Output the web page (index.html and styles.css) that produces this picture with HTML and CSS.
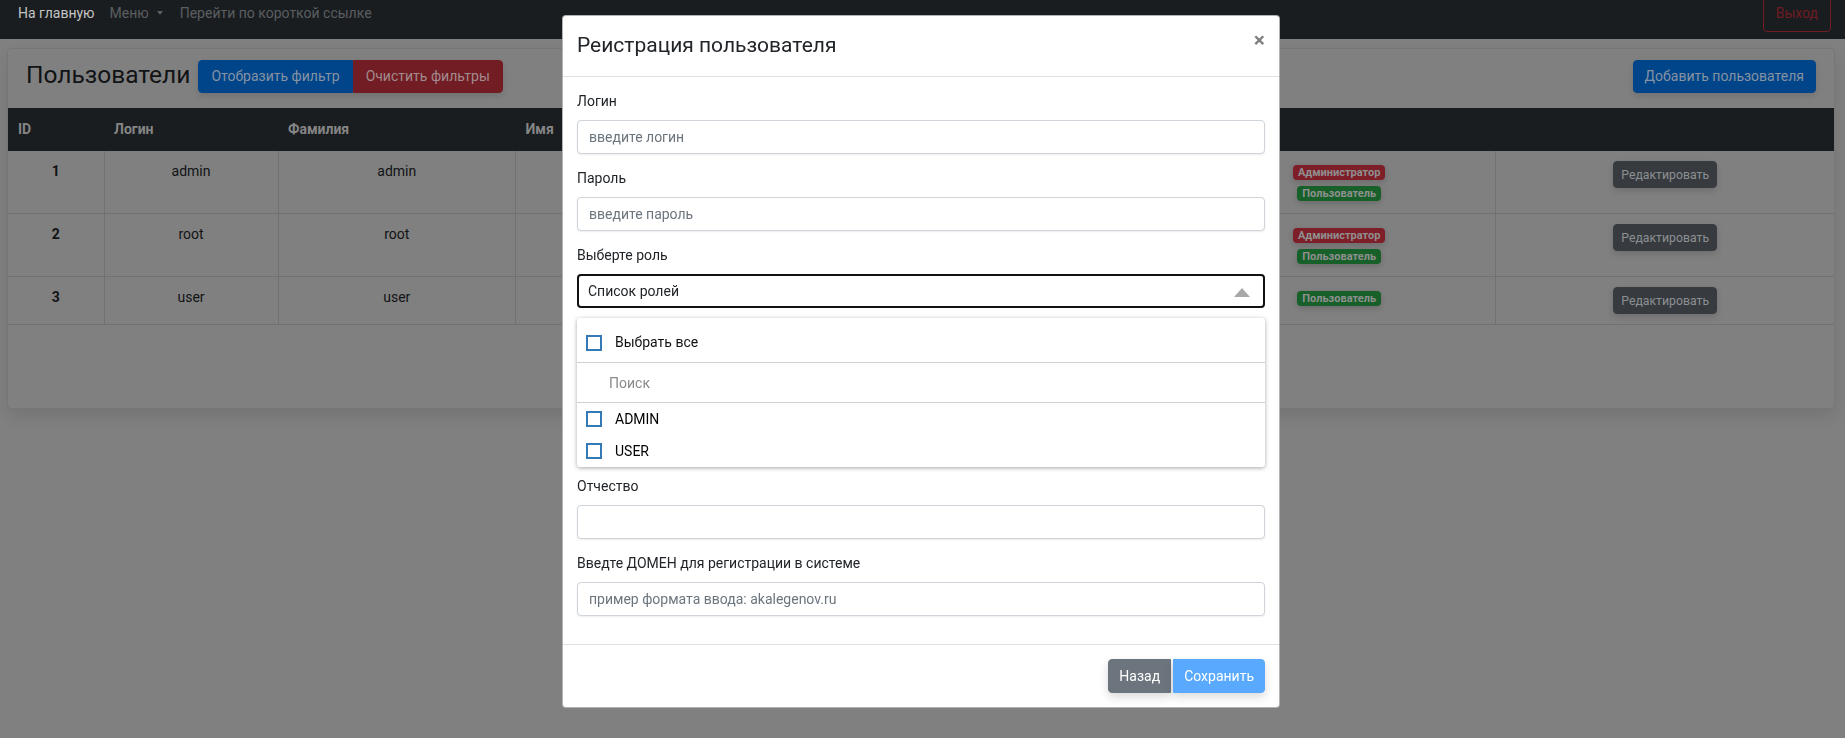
FILE: index.html
```html
<!DOCTYPE html>
<html lang="ru">
<head>
<meta charset="utf-8">
<title>Пользователи</title>
<link rel="stylesheet" href="styles.css">
</head>
<body>
<nav class="navbar">
  <div class="nav-left">
    <a class="brand">На главную</a>
    <a class="nav-link menu">Меню<span class="caret"></span></a>
    <a class="nav-link">Перейти по короткой ссылке</a>
  </div>
  <button class="btn-logout">Выход</button>
</nav>

<main class="page">
  <section class="card">
    <div class="card-head">
      <h3 class="title">Пользователи</h3>
      <div class="btn-group">
        <button class="btn btn-primary">Отобразить фильтр</button>
        <button class="btn btn-danger">Очистить фильтры</button>
      </div>
      <button class="btn btn-primary add">Добавить пользователя</button>
    </div>
    <table class="users">
      <colgroup>
        <col class="c-id"><col class="c-login"><col class="c-last"><col class="c-first"><col class="c-mid"><col class="c-role"><col>
      </colgroup>
      <thead>
        <tr><th>ID</th><th>Логин</th><th>Фамилия</th><th>Имя</th><th>Отчество</th><th>Роли</th><th></th></tr>
      </thead>
      <tbody>
        <tr>
          <td class="id">1</td><td>admin</td><td>admin</td><td>admin</td><td>admin</td>
          <td><span class="badge red">Администратор</span><br><span class="badge green">Пользователь</span></td>
          <td><button class="btn-edit">Редактировать</button></td>
        </tr>
        <tr>
          <td class="id">2</td><td>root</td><td>root</td><td>root</td><td>root</td>
          <td><span class="badge red">Администратор</span><br><span class="badge green">Пользователь</span></td>
          <td><button class="btn-edit">Редактировать</button></td>
        </tr>
        <tr>
          <td class="id">3</td><td>user</td><td>user</td><td>user</td><td>user</td>
          <td><span class="badge green">Пользователь</span></td>
          <td><button class="btn-edit">Редактировать</button></td>
        </tr>
      </tbody>
    </table>
  </section>
</main>

<div class="modal-layer">
  <div class="modal">
    <div class="modal-header">
      <h4 class="modal-title">Реистрация пользователя</h4>
      <button class="close">×</button>
    </div>
    <div class="modal-body">
      <div class="group">
        <label class="label">Логин</label>
        <input class="input" placeholder="введите логин">
      </div>
      <div class="group">
        <label class="label">Пароль</label>
        <input class="input" placeholder="введите пароль">
      </div>
      <div class="group select-group">
        <label class="label">Выберте роль</label>
        <div class="select">
          <span>Список ролей</span>
          <span class="tri"></span>
        </div>
        <div class="dropdown">
          <div class="dd-all"><span class="check"></span><span>Выбрать все</span></div>
          <div class="dd-search"><input class="search" placeholder="Поиск"></div>
          <div class="dd-opt"><span class="check"></span><span>ADMIN</span></div>
          <div class="dd-opt"><span class="check"></span><span>USER</span></div>
        </div>
      </div>
      <div class="group covered">
        <label class="label">Фамилия</label>
        <input class="input">
      </div>
      <div class="group covered">
        <label class="label">Имя</label>
        <input class="input">
      </div>
      <div class="group">
        <label class="label">Отчество</label>
        <input class="input">
      </div>
      <div class="group">
        <label class="label">Введте ДОМЕН для регистрации в системе</label>
        <input class="input" placeholder="пример формата ввода: akalegenov.ru">
      </div>
    </div>
    <div class="modal-footer">
      <button class="fbtn back">Назад</button>
      <button class="fbtn save">Сохранить</button>
    </div>
  </div>
</div>
</body>
</html>
```

FILE: styles.css
```css
* { box-sizing: border-box; }

body {
  margin: 0;
  height: 738px;
  overflow: hidden;
  font-family: Roboto, "Liberation Sans", Arial, sans-serif;
  font-size: 14px;
  line-height: 1.5;
  color: #111315;
  background: #808080;
}

button { font-family: inherit; }

/* navbar */
.navbar {
  display: flex;
  align-items: center;
  justify-content: space-between;
  height: 52px;
  margin-top: -13px;
  padding: 0 14px 0 18px;
  background: #1a1d20;
}
.nav-left { display: flex; align-items: center; }
.brand { color: #c4c4c4; margin-right: 15px; }
.nav-link { color: #5b5d60; }
.menu { display: flex; align-items: center; margin-right: 17px; }
.caret {
  margin-left: 8px;
  width: 0; height: 0;
  border-left: 3px solid transparent;
  border-right: 3px solid transparent;
  border-top: 4px solid #5b5d60;
}
.btn-logout {
  font-size: 14px;
  line-height: 21px;
  padding: 7px 12px;
  background: transparent;
  color: #6e1b23;
  border: 1px solid #6e1b23;
  border-radius: 4px;
}

/* card */
.page { padding: 9px 10px 0 7px; }
.card {
  height: 361px;
  background: #808080;
  border: 1px solid #767676;
  border-radius: 4px;
  box-shadow: 0 8px 16px rgba(0,0,0,.09);
}
.card-head {
  display: flex;
  align-items: center;
  padding: 11px 18px 15px 18px;
}
.title {
  margin: 0 8px 3px 0;
  font-size: 24.5px;
  font-weight: 400;
  line-height: 1.2;
  color: #111315;
}
.btn-group { display: flex; box-shadow: 0 3px 6px rgba(0,0,0,.12); border-radius: 4px; }
.btn {
  font-size: 14px;
  line-height: 21px;
  padding: 5px 12px;
  border: 1px solid transparent;
  border-radius: 4px;
  color: #8593a2;
}
.btn-primary { background: #00448a; border-color: #00448a; }
.btn-danger { background: #721c24; border-color: #721c24; color: #a08c8e; }
.btn-group .btn-primary { border-top-right-radius: 0; border-bottom-right-radius: 0; }
.btn-group .btn-danger { border-top-left-radius: 0; border-bottom-left-radius: 0; }
.add { margin-left: auto; padding: 5px 11px; box-shadow: 0 3px 6px rgba(0,0,0,.12); }

/* table */
.users {
  width: 100%;
  border-collapse: collapse;
  table-layout: fixed;
}
.c-id { width: 96px; }
.c-login { width: 174px; }
.c-last { width: 237.5px; }
.c-first { width: 333.5px; }
.c-mid { width: 333.5px; }
.c-role { width: 313.4px; }
.users th {
  background: #1a1d20;
  color: #858585;
  font-weight: 700;
  text-align: left;
  padding: 11px 10px;
  line-height: 21px;
}
.users td {
  padding: 10px;
  line-height: 21px;
  text-align: center;
  vertical-align: top;
  border: 1px solid #6f7173;
  color: #111315;
}
.users td:first-child { border-left: none; }
.users td:last-child { border-right: none; }
.users tbody tr:first-child td { border-top: none; }
.users .id { font-weight: 700; }

.badge {
  display: inline-block;
  vertical-align: middle;
  font-size: 11px;
  font-weight: 700;
  line-height: 1;
  padding: 2px 5px;
  border-radius: 4px;
  color: #8f8f8f;
  box-shadow: 0 2px 6px rgba(0,0,0,.18);
}
.red { background: #7e1e28; }
.green { background: #17602a; }

.btn-edit {
  font-size: 12.25px;
  line-height: 18.4px;
  padding: 3.5px 7px;
  border: 1px solid #373b3f;
  border-radius: 4px;
  background: #373b3f;
  color: #8c8f92;
  box-shadow: 0 3px 7px rgba(0,0,0,.14);
}

/* modal */
.modal-layer {
  position: fixed;
  inset: 0;
  display: flex;
  justify-content: center;
  align-items: flex-start;
  padding-right: 3px;
}
.modal {
  width: 718px;
  margin-top: 15px;
  background: #fff;
  border: 1px solid rgba(0,0,0,.3);
  border-radius: 4px;
  color: #212529;
}
.modal-header {
  display: flex;
  align-items: flex-start;
  padding: 14px 14px 14.5px 14px;
  border-bottom: 1px solid #dee2e6;
}
.modal-title {
  margin: 0;
  font-size: 21px;
  font-weight: 400;
  line-height: 31.5px;
  color: #212529;
}
.close {
  margin: -14px -14px -14px auto;
  padding: 14px;
  background: transparent;
  border: 0;
  font-size: 21px;
  font-weight: 700;
  line-height: 1;
  color: #000;
  opacity: .5;
}
.modal-body { padding: 14px; }
.group { margin-bottom: 14px; }
.covered { visibility: hidden; }
.label {
  display: block;
  margin-bottom: 8px;
  line-height: 21px;
  color: #212529;
}
.input {
  display: block;
  width: 100%;
  height: 34px;
  padding: 0 11px;
  font-family: inherit;
  font-size: 14px;
  color: #495057;
  background: #fff;
  border: 1px solid #ced4da;
  border-radius: 4px;
  box-shadow: 0 1px 2px rgba(0,0,0,.07);
}
.input::placeholder { color: #6c757d; }

.select-group { position: relative; }
.select {
  display: flex;
  align-items: center;
  justify-content: space-between;
  height: 34px;
  padding: 0 13px 0 9px;
  border: 2px solid #111;
  border-radius: 4px;
  color: #212529;
}
.tri {
  width: 0; height: 0;
  border-left: 8.5px solid transparent;
  border-right: 8.5px solid transparent;
  border-bottom: 9px solid #a8a8a8;
  margin-top: 2px;
}
.dropdown {
  position: absolute;
  left: 0;
  right: 0;
  top: 73px;
  z-index: 5;
  background: #fff;
  border-radius: 3px;
  box-shadow: 0 1px 4px rgba(0,0,0,.35);
}
.check {
  width: 16px;
  height: 16px;
  border: 2px solid #337ab7;
  background: #fff;
  flex: none;
}
.dd-all {
  display: flex;
  align-items: center;
  gap: 13px;
  height: 45px;
  padding: 5px 0 0 9px;
  border-bottom: 1px solid #d0d0d0;
  color: #111;
}
.dd-search {
  height: 40px;
  border-bottom: 1px solid #d0d0d0;
}
.search {
  width: 100%;
  height: 39px;
  border: 0;
  padding: 0 0 0 32px;
  font-family: inherit;
  font-size: 14px;
  background: transparent;
  outline: none;
}
.search::placeholder { color: #8a8a8a; }
.dd-opt {
  display: flex;
  align-items: center;
  gap: 13px;
  height: 32px;
  padding-left: 9px;
  color: #000;
}

.modal-footer {
  display: flex;
  justify-content: flex-end;
  padding: 14px;
  border-top: 1px solid #dee2e6;
}
.fbtn {
  font-size: 14px;
  line-height: 20px;
  padding: 6px 10px;
  border: 1px solid transparent;
  color: #fff;
  box-shadow: 0 4px 10px rgba(0,0,0,.15);
}
.back {
  background: #6c757d;
  border-color: #6c757d;
  border-radius: 4px 0 0 4px;
}
.save {
  margin-left: 2px;
  background: #59a9ff;
  border-color: #59a9ff;
  border-radius: 0 4px 4px 0;
}
```
